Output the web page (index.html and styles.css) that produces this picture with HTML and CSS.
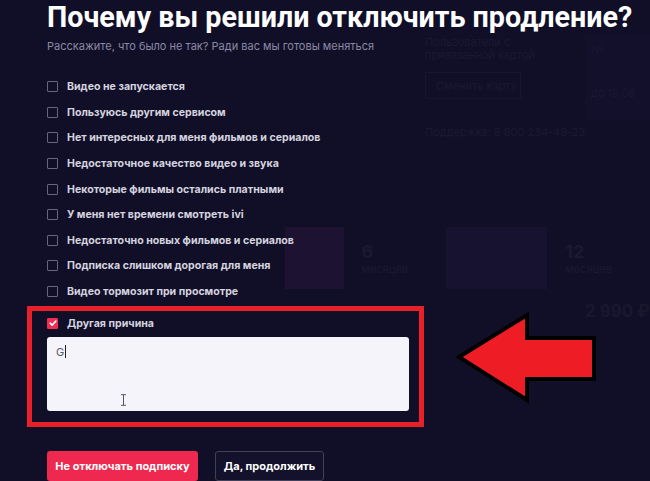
FILE: index.html
```html
<!DOCTYPE html>
<html lang="ru">
<head>
<meta charset="utf-8">
<title>Отключение продления</title>
<link rel="stylesheet" href="styles.css">
</head>
<body>
<div class="page">
  <div class="bg-row1">
    <div class="bg-right">
      <p class="bg-text bg-t3">Пользователи с привязанной картой</p>
      <div class="bg-btn">Сменить карту</div>
      <p class="bg-text bg-t4">Поддержка: 8 800 234-49-23</p>
    </div>
    <div class="bg-panel">
      <p class="bg-text">Ivi</p>
      <p class="bg-text bg-t5">до 19.08</p>
    </div>
  </div>
  <div class="bg-cards">
    <div class="bg-card bg-card-a"></div>
    <div class="bg-term"><span class="bg-num">6</span><span class="bg-text">месяцев</span></div>
    <div class="bg-card bg-card-b"></div>
    <div class="bg-term"><span class="bg-num">12</span><span class="bg-text">месяцев</span></div>
  </div>
  <div class="bg-prices">
    <span class="bg-price">2 990 ₽</span>
  </div>
</div>

<div class="modal">
  <h1 class="title">Почему вы решили отключить продление?</h1>
  <p class="subtitle">Расскажите, что было не так? Ради вас мы готовы меняться</p>
  <ul class="reasons">
    <li class="reason"><span class="box"></span>Видео не запускается</li>
    <li class="reason"><span class="box"></span>Пользуюсь другим сервисом</li>
    <li class="reason"><span class="box"></span>Нет интересных для меня фильмов и сериалов</li>
    <li class="reason"><span class="box"></span>Недостаточное качество видео и звука</li>
    <li class="reason"><span class="box"></span>Некоторые фильмы остались платными</li>
    <li class="reason"><span class="box"></span>У меня нет времени смотреть ivi</li>
    <li class="reason"><span class="box"></span>Недостаточно новых фильмов и сериалов</li>
    <li class="reason"><span class="box"></span>Подписка слишком дорогая для меня</li>
    <li class="reason"><span class="box"></span>Видео тормозит при просмотре</li>
  </ul>
  <div class="highlight">
    <div class="reason checked-row">
      <span class="box checked">
        <svg viewBox="0 0 10 10" width="10" height="10"><path d="M2.2 5.2 L4.2 7.1 L7.9 3" fill="none" stroke="#fff" stroke-width="1.6" stroke-linecap="round" stroke-linejoin="round"/></svg>
      </span>Другая причина
    </div>
    <div class="field"><span class="typed">G</span><span class="caret"></span></div>
  </div>
  <div class="actions">
    <button class="btn btn-primary">Не отключать подписку</button>
    <button class="btn btn-secondary">Да, продолжить</button>
  </div>
</div>

<svg class="ibeam" width="7" height="12" viewBox="0 0 7 12"><path d="M1 0.7 H6 M3.5 0.7 V11.3 M1 11.3 H6" stroke="#55555f" stroke-width="1" fill="none"/></svg>

<svg class="arrow" width="145" height="95" viewBox="0 0 145 95">
  <polygon points="4,47 72,5 72,28 139,28 139,69 72,69 72,90" fill="#ee1c24" stroke="#000" stroke-width="4" stroke-linejoin="miter"/>
</svg>
</body>
</html>
```
FILE: styles.css
```css
* { box-sizing: border-box; }
html, body {
  margin: 0;
  padding: 0;
  width: 650px;
  height: 481px;
  overflow: hidden;
  background: #110f28;
  font-family: Inter, "Noto Sans", sans-serif;
}
body { position: relative; }
p, h1, h2, ul { margin: 0; padding: 0; }

/* faint page behind the modal */
.page {
  width: 650px;
  height: 481px;
}
.bg-text { font-size: 11px; color: #1a1832; white-space: nowrap; }
.bg-row1 { display: flex; height: 225px; padding-left: 425px; }
.bg-right { width: 160px; padding-top: 36px; }
.bg-t3 { width: 120px; line-height: 13px; white-space: normal; }
.bg-btn {
  margin-top: 10px; width: 96px; height: 27px; border: 1px solid #171530;
  font-size: 11px; color: #1a1832; display: flex; align-items: center; padding-left: 10px;
}
.bg-t4 { margin-top: 26px; }
.bg-panel {
  margin-top: 34px; width: 65px; height: 86px; background: #12102b; padding: 8px 6px;
}
.bg-t5 { margin-top: 30px; }
.bg-cards { display: flex; align-items: center; height: 66px; padding-left: 285px; }
.bg-card { height: 62px; }
.bg-card-a { width: 65px; background: #1d1231; }
.bg-card-b { width: 112px; background: #17122f; }
.bg-term { width: 112px; display: flex; flex-direction: column; padding-left: 18px; }
.bg-num { font-size: 18px; font-weight: 700; color: #1a1832; }
.bg-prices { display: flex; height: 40px; align-items: center; padding-left: 585px; }
.bg-price { font-size: 17px; font-weight: 700; color: #19172f; white-space: nowrap; }

/* modal */
.modal {
  position: absolute;
  left: 0;
  top: 0;
  width: 650px;
  padding-left: 47px;
}
.title {
  font-family: Roboto, Inter, sans-serif;
  font-size: 28.7px;
  font-weight: 700;
  color: #ffffff;
  line-height: 34px;
  white-space: nowrap;
}
.subtitle {
  margin-top: 4px;
  font-size: 11px;
  line-height: 16px;
  color: #8b89a3;
}
.reasons {
  list-style: none;
  margin-top: 20px;
}
.reason {
  display: flex;
  align-items: center;
  height: 25.6px;
  font-size: 10.6px;
  font-weight: 700;
  color: #d4d3df;
  white-space: nowrap;
}
.box {
  width: 11px;
  height: 11px;
  border: 1.5px solid #66647e;
  border-radius: 1px;
  margin-right: 9px;
  flex: none;
  display: flex;
  align-items: center;
  justify-content: center;
}
.highlight {
  margin: 2px 0 0 -20px;
  width: 397px;
  border: 5px solid #e8202a;
  padding: 0 10px 11px 15px;
}
.checked-row { height: 24px; }
.box.checked {
  background: #f02d52;
  border-color: #f02d52;
}
.box.checked svg { display: block; margin: -1.5px; }
.field {
  margin-top: 2px;
  height: 74px;
  background: #f4f4fa;
  border-radius: 3px;
  padding: 8px 9px;
  display: flex;
  align-items: flex-start;
  font-size: 11px;
  color: #5a5a66;
}
.typed { line-height: 14px; }
.caret { width: 1px; height: 13px; background: #222; margin-left: 1px; }
.actions {
  display: flex;
  gap: 17px;
  margin-top: 24px;
}
.btn {
  height: 30px;
  font-family: Inter, "Noto Sans", sans-serif;
  font-size: 11px;
  font-weight: 700;
  color: #ffffff;
  border-radius: 3px;
  padding: 0;
  white-space: nowrap;
}
.btn-primary {
  width: 151px;
  background: #ef2850;
  border: none;
}
.btn-secondary {
  width: 109px;
  background: #13112b;
  border: 1px solid #413f5a;
}

/* annotations / cursor */
.ibeam { position: absolute; left: 120px; top: 394px; }
.arrow { position: absolute; left: 455px; top: 310px; }
```
